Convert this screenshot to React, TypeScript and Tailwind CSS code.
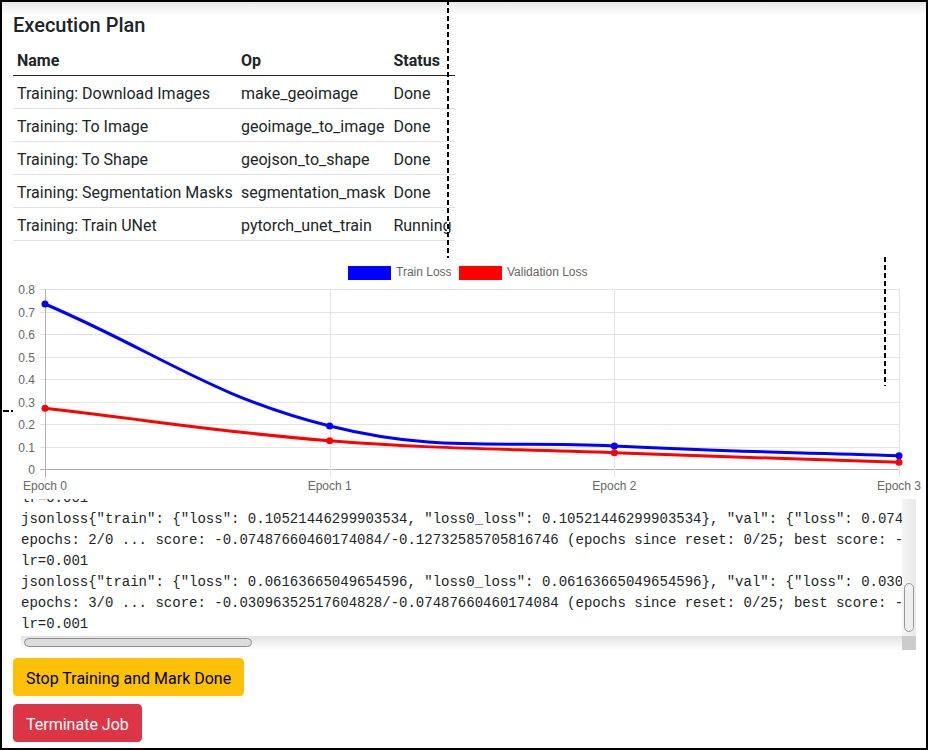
import React from "react";

type P = { x: number; y: number };

function splinePath(pts: P[], t = 0.4): string {
  const cps = pts.map((cur, i) => {
    const prev = i === 0 ? cur : pts[i - 1];
    const next = i === pts.length - 1 ? cur : pts[i + 1];
    const d01 = Math.hypot(cur.x - prev.x, cur.y - prev.y);
    const d12 = Math.hypot(next.x - cur.x, next.y - cur.y);
    let s01 = d01 / (d01 + d12);
    let s12 = d12 / (d01 + d12);
    if (isNaN(s01)) s01 = 0;
    if (isNaN(s12)) s12 = 0;
    const fa = t * s01;
    const fb = t * s12;
    return {
      prev: { x: cur.x - fa * (next.x - prev.x), y: cur.y - fa * (next.y - prev.y) },
      next: { x: cur.x + fb * (next.x - prev.x), y: cur.y + fb * (next.y - prev.y) },
    };
  });
  let d = `M ${pts[0].x} ${pts[0].y}`;
  for (let i = 1; i < pts.length; i++) {
    const a = cps[i - 1].next;
    const b = cps[i].prev;
    d += ` C ${a.x} ${a.y} ${b.x} ${b.y} ${pts[i].x} ${pts[i].y}`;
  }
  return d;
}

const X0 = 45;
const X3 = 899;
const Y0 = 469;
const STEP = 22.5;
const xs = [0, 1, 2, 3].map((i) => X0 + ((X3 - X0) * i) / 3);
const trainY = [304, 426, 446, 455.7];
const valY = [408.3, 440.7, 452.7, 462.3];

function Chart() {
  const train = xs.map((x, i) => ({ x, y: trainY[i] }));
  const val = xs.map((x, i) => ({ x, y: valY[i] }));
  const labels = ["0.8", "0.7", "0.6", "0.5", "0.4", "0.3", "0.2", "0.1", "0"];
  return (
    <svg width={915} height={258} className="block overflow-visible" style={{ fontFamily: '"Liberation Sans", Arial, sans-serif' }}>
      <g transform="translate(-13,-241)">
        {labels.map((l, k) => {
          const y = Math.round(Y0 - (8 - k) * STEP) + 0.5;
          return (
            <g key={l}>
              <line x1={40} x2={X3} y1={y} y2={y} stroke={k === 8 ? "#b0b0b0" : "#e3e3e3"} strokeWidth={1} />
              <text x={35} y={y} textAnchor="end" dominantBaseline="central" fontSize={12} fill="#666">
                {l}
              </text>
            </g>
          );
        })}
        {xs.map((x, i) => {
          const xx = Math.round(x) + 0.5;
          return (
            <g key={i}>
              <line x1={xx} x2={xx} y1={289} y2={477} stroke={i === 0 ? "#b0b0b0" : "#e3e3e3"} strokeWidth={1} />
              <text x={x} y={486} textAnchor="middle" dominantBaseline="central" fontSize={12} fill="#666">
                {`Epoch ${i}`}
              </text>
            </g>
          );
        })}
        <rect x={348} y={266} width={43} height={14} fill="#0000ff" />
        <text x={396} y={272} dominantBaseline="central" fontSize={12} fill="#666">
          Train Loss
        </text>
        <rect x={459} y={266} width={43} height={14} fill="#ff0000" />
        <text x={507} y={272} dominantBaseline="central" fontSize={12} fill="#666">
          Validation Loss
        </text>
        <path d={splinePath(val)} fill="none" stroke="#ff0000" strokeWidth={3} />
        {val.map((p, i) => (
          <circle key={i} cx={p.x} cy={p.y} r={3.5} fill="#ff0000" />
        ))}
        <path d={splinePath(train)} fill="none" stroke="#0000ff" strokeWidth={3} />
        {train.map((p, i) => (
          <circle key={i} cx={p.x} cy={p.y} r={3.5} fill="#0000ff" />
        ))}
      </g>
    </svg>
  );
}

const rows = [
  ["Training: Download Images", "make_geoimage", "Done"],
  ["Training: To Image", "geoimage_to_image", "Done"],
  ["Training: To Shape", "geojson_to_shape", "Done"],
  ["Training: Segmentation Masks", "segmentation_mask", "Done"],
  ["Training: Train UNet", "pytorch_unet_train", "Running"],
];

const logLines = [
  'jsonloss{"train": {"loss": 0.19143812358379364, "loss0_loss": 0.19143812358379364}, "val": {"loss": 0.12732585705816746, "loss0_loss": 0.12732585705816746}}',
  "epochs: 1/0 ... score: -0.12732585705816746/-0.27113418281078339 (epochs since reset: 0/25; best score: -0.12732585705816746)",
  "lr=0.001",
  'jsonloss{"train": {"loss": 0.10521446299903534, "loss0_loss": 0.10521446299903534}, "val": {"loss": 0.07487660460174084, "loss0_loss": 0.07487660460174084}}',
  "epochs: 2/0 ... score: -0.07487660460174084/-0.12732585705816746 (epochs since reset: 0/25; best score: -0.07487660460174084)",
  "lr=0.001",
  'jsonloss{"train": {"loss": 0.06163665049654596, "loss0_loss": 0.06163665049654596}, "val": {"loss": 0.03096352517604828, "loss0_loss": 0.03096352517604828}}',
  "epochs: 3/0 ... score: -0.03096352517604828/-0.07487660460174084 (epochs since reset: 0/25; best score: -0.03096352517604828)",
  "lr=0.001",
];

export default function App() {
  return (
    <div
      className="relative w-[928px] h-[750px] border-2 border-black bg-white overflow-hidden text-[#212529]"
      style={{ fontFamily: 'Roboto, "Liberation Sans", Arial, sans-serif' }}
    >
      <div className="pointer-events-none absolute left-0 right-0 top-0 h-[14px] bg-gradient-to-b from-[#e9e9e9] to-white/0" />
      <div className="relative pl-[11px] pt-[11px]">
        <h3 className="text-[20px] leading-[24px] font-medium mb-[6px]">Execution Plan</h3>
        <table className="border-collapse text-[16px] leading-[24px]">
          <thead>
            <tr className="border-b border-[#212529]">
              <th className="w-[224px] text-left font-bold px-1 pt-[6px] pb-[2px] whitespace-nowrap">Name</th>
              <th className="w-[152px] text-left font-bold px-1 pt-[6px] pb-[2px] whitespace-nowrap">Op</th>
              <th className="w-[66px] text-left font-bold px-1 pt-[6px] pb-[2px] whitespace-nowrap">Status</th>
            </tr>
          </thead>
          <tbody>
            {rows.map((r) => (
              <tr key={r[0]} className="border-b border-[#dee2e6]">
                <td className="px-1 pt-[6px] pb-[2px] whitespace-nowrap">{r[0]}</td>
                <td className="px-1 pt-[6px] pb-[2px] whitespace-nowrap">{r[1]}</td>
                <td className="px-1 pt-[6px] pb-[2px] whitespace-nowrap">{r[2]}</td>
              </tr>
            ))}
          </tbody>
        </table>

        <Chart />

        <div className="ml-2 w-[895px] h-[151px] flex flex-col">
          <div className="flex h-[137px]">
            <div
              className="w-[881px] h-[137px] overflow-hidden flex flex-col justify-end pb-[1px] text-[14px] leading-[21px] text-[#212529]"
              style={{ fontFamily: '"Liberation Mono", "Courier New", monospace' }}
            >
              {logLines.map((l, i) => (
                <div key={i} className="whitespace-pre">
                  {l}
                </div>
              ))}
            </div>
            <div className="relative w-[14px] h-[137px] bg-gradient-to-r from-[#f4f4f4] to-[#e9e9e9]">
              <div className="absolute left-[2px] top-[84px] w-[10px] h-[49px] rounded-full border border-[#9a9a9a] bg-[#efefef]" />
            </div>
          </div>
          <div className="flex h-[14px]">
            <div className="relative w-[881px] h-[14px] bg-gradient-to-b from-[#e2e2e2] to-white">
              <div className="absolute left-[3px] top-[2px] w-[228px] h-[9px] rounded-full border border-[#8f8f8f] bg-[#dcdcdc]" />
            </div>
            <div className="w-[14px] h-[14px] bg-[#cccccc]" />
          </div>
        </div>

        <div className="mt-2 flex flex-col items-start gap-2">
          <button className="block px-3 pt-[8px] pb-[4px] text-[16px] leading-[24px] rounded border border-[#ffc107] bg-[#ffc107] text-black">
            Stop Training and Mark Done
          </button>
          <button className="block px-3 pt-[8px] pb-[4px] text-[16px] leading-[24px] rounded border border-[#dc3545] bg-[#dc3545] text-white">
            Terminate Job
          </button>
        </div>
      </div>

      <div className="pointer-events-none absolute left-[-2px] top-[-2px] w-[449px] h-[2px] bg-[repeating-linear-gradient(to_right,#000_0_5px,#fff_5px_8px)]" />
      <div className="pointer-events-none absolute left-[-2px] top-[-2px] w-[2px] h-[412px] bg-[repeating-linear-gradient(to_bottom,#000_0_5px,#fff_5px_8px)]" />
      <div className="pointer-events-none absolute left-[445px] top-[-2px] w-[2px] h-[258px] bg-[repeating-linear-gradient(to_bottom,#000_0_5px,#fff_5px_8px)]" />
      <div className="pointer-events-none absolute left-[1px] top-[408px] w-[10px] h-[2px] bg-[repeating-linear-gradient(to_right,#000_0_6px,#fff_6px_8px)]" />
      <div className="pointer-events-none absolute left-[882px] top-[255px] w-[2px] h-[129px] bg-[repeating-linear-gradient(to_bottom,#000_0_5px,#fff_5px_8px)]" />
    </div>
  );
}
